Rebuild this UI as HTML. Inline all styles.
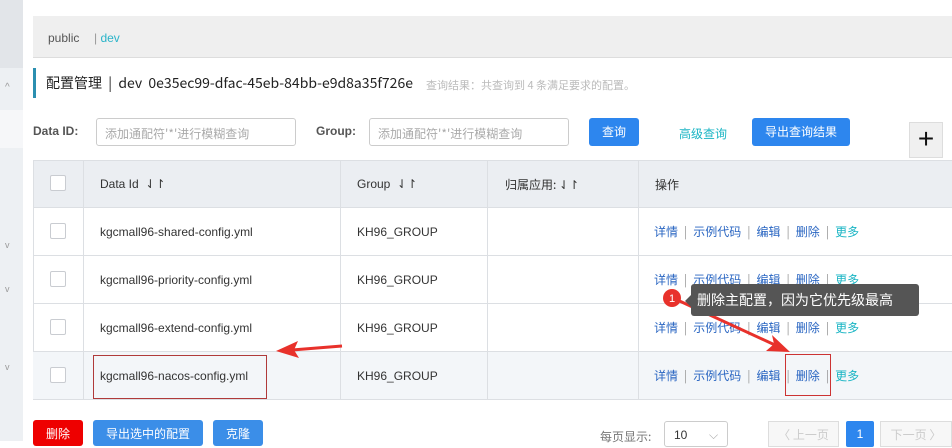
<!DOCTYPE html>
<html><head><meta charset="utf-8"><style>
*{box-sizing:border-box;margin:0;padding:0}
body{width:952px;height:441px;overflow:hidden;background:#fff;font-family:"Liberation Sans","Noto Sans CJK SC",sans-serif;font-size:12px;color:#333;position:relative}
.a{position:absolute}
.cn{font-family:"Noto Sans CJK SC","Liberation Sans",sans-serif}
.btn{position:absolute;background:#2d86ee;color:#fff;border-radius:3px;text-align:center;font-size:12px}
.cb{position:absolute;left:50px;width:16px;height:16px;border:1px solid #c9ccd1;background:#fff;border-radius:2px}
.row{position:absolute;left:33px;width:919px;height:48px;border-bottom:1px solid #dcdfe3}
.cell{position:absolute;top:0;height:100%;line-height:48px;font-size:12px;color:#333}
.ops{position:absolute;left:654px;font-size:12px;color:#2a66c2;line-height:48px}
.ops i{font-style:normal;color:#999;margin:0 6px}
.ops b{font-weight:normal;color:#1bb5c4}
.vl{position:absolute;top:160px;height:240px;width:1px;background:#dcdfe3}
</style></head><body>
<div class="a" style="left:0;top:0;width:23px;height:441px;background:#edf0f3"></div>
<div class="a" style="left:0;top:0;width:23px;height:68px;background:#e2e5e9"></div>
<div class="a" style="left:0;top:110px;width:23px;height:38px;background:#f6f7f9"></div>
<div class="a" style="left:5px;top:82px;color:#999;font-size:10px">^</div>
<div class="a" style="left:5px;top:240px;color:#999;font-size:9px">v</div>
<div class="a" style="left:5px;top:284px;color:#999;font-size:9px">v</div>
<div class="a" style="left:5px;top:362px;color:#999;font-size:9px">v</div>

<div class="a" style="left:33px;top:16px;width:919px;height:42px;background:#efefef;border-bottom:1px solid #ddd"></div>
<div class="a" style="left:48px;top:31px;font-size:12px;color:#555">public</div>
<div class="a" style="left:94px;top:31px;font-size:12px;color:#2bb4c9"><span style="color:#999">|</span> dev</div>

<div class="a" style="left:33px;top:68px;width:3px;height:30px;background:#2b8fb0"></div>
<div class="a cn" style="left:46px;top:73px;font-size:14px;color:#222">配置管理 &nbsp;| &nbsp;dev &nbsp;0e35ec99-dfac-45eb-84bb-e9d8a35f726e</div>
<div class="a cn" style="left:426px;top:77px;font-size:11px;color:#bbb">查询结果：共查询到 4 条满足要求的配置。</div>

<div class="a" style="left:33px;top:124px;font-weight:bold;color:#555;font-size:12px">Data ID:</div>
<div class="a cn" style="left:96px;top:118px;width:200px;height:28px;border:1px solid #ccc;border-radius:3px;padding:6px 8px;font-size:12px;color:#aaa">添加通配符'*'进行模糊查询</div>
<div class="a" style="left:316px;top:124px;font-weight:bold;color:#555;font-size:12px">Group:</div>
<div class="a cn" style="left:369px;top:118px;width:200px;height:28px;border:1px solid #ccc;border-radius:3px;padding:6px 8px;font-size:12px;color:#aaa">添加通配符'*'进行模糊查询</div>
<div class="btn cn" style="left:589px;top:118px;width:50px;height:28px;line-height:28px">查询</div>
<div class="a cn" style="left:679px;top:125px;color:#1bb5c4;font-size:12px">高级查询</div>
<div class="btn cn" style="left:752px;top:118px;width:98px;height:28px;line-height:28px">导出查询结果</div>
<div class="a" style="left:909px;top:122px;width:34px;height:36px;background:#f0f0f0;border:1px solid #ddd;text-align:center;line-height:32px;font-size:28px;color:#111">+</div>

<div class="a" style="left:33px;top:160px;width:919px;height:48px;background:#ebeef2;border-top:1px solid #dcdfe3;border-bottom:1px solid #dcdfe3"></div>
<div class="a" style="left:33px;top:160px;width:1px;height:240px;background:#dcdfe3"></div>
<div class="cb" style="top:175px"></div>
<div class="a" style="left:100px;top:177px;color:#333">Data Id &nbsp;⇃↾</div>
<div class="a" style="left:357px;top:177px;color:#333">Group &nbsp;⇃↾</div>
<div class="a cn" style="left:505px;top:176px;color:#333">归属应用: ⇃↾</div>
<div class="a cn" style="left:655px;top:176px;color:#333">操作</div>

<div class="row" style="top:208px"><div class="cb" style="left:17px;top:15px"></div><div class="cell" style="left:67px">kgcmall96-shared-config.yml</div><div class="cell" style="left:324px">KH96_GROUP</div><div class="ops cn" style="left:621px">详情<i>|</i>示例代码<i>|</i>编辑<i>|</i>删除<i>|</i><b>更多</b></div></div>
<div class="row" style="top:256px"><div class="cb" style="left:17px;top:15px"></div><div class="cell" style="left:67px">kgcmall96-priority-config.yml</div><div class="cell" style="left:324px">KH96_GROUP</div><div class="ops cn" style="left:621px">详情<i>|</i>示例代码<i>|</i>编辑<i>|</i>删除<i>|</i><b>更多</b></div></div>
<div class="row" style="top:304px"><div class="cb" style="left:17px;top:15px"></div><div class="cell" style="left:67px">kgcmall96-extend-config.yml</div><div class="cell" style="left:324px">KH96_GROUP</div><div class="ops cn" style="left:621px">详情<i>|</i>示例代码<i>|</i>编辑<i>|</i>删除<i>|</i><b>更多</b></div></div>
<div class="row" style="top:352px;background:#f3f6f9"><div class="cb" style="left:17px;top:15px"></div><div class="cell" style="left:67px">kgcmall96-nacos-config.yml</div><div class="cell" style="left:324px">KH96_GROUP</div><div class="ops cn" style="left:621px">详情<i>|</i>示例代码<i>|</i>编辑<i>|</i>删除<i>|</i><b>更多</b></div></div>
<div class="vl" style="left:83px"></div><div class="vl" style="left:340px"></div><div class="vl" style="left:487px"></div><div class="vl" style="left:638px"></div>

<div class="a" style="left:93px;top:355px;width:174px;height:44px;border:1px solid #b03a3a"></div>
<div class="a" style="left:785px;top:354px;width:46px;height:42px;border:1px solid #c33"></div>

<svg class="a" style="left:0;top:0" width="952" height="441">
<path d="M342,346 L292,350" stroke="#e8312b" stroke-width="3"/>
<path d="M276,351 L298,341 L294,350 L299,358 Z" fill="#e8312b"/>
<path d="M673,298 L775,345" stroke="#e8312b" stroke-width="3"/>
<path d="M790,352 L766,351 L774,344 L772,335 Z" fill="#e8312b"/>
<circle cx="672" cy="298" r="9" fill="#e8312b"/>
<text x="672" y="302" fill="#fff" font-size="11" text-anchor="middle" font-family="Liberation Sans">1</text>
</svg>
<div class="a" style="left:691px;top:284px;width:228px;height:32px;background:#555;border-radius:3px"></div>
<div class="a" style="left:685px;top:295px;width:0;height:0;border-top:6px solid transparent;border-bottom:6px solid transparent;border-right:6px solid #555"></div>
<div class="a cn" style="left:697px;top:290px;color:#fff;font-size:14px">删除主配置，因为它优先级最高</div>

<div class="btn cn" style="left:33px;top:420px;width:50px;height:26px;line-height:28px;background:#e00;">删除</div>
<div class="btn cn" style="left:93px;top:420px;width:110px;height:26px;line-height:28px;background:#3b8ee8">导出选中的配置</div>
<div class="btn cn" style="left:213px;top:420px;width:50px;height:26px;line-height:28px;background:#3b8ee8">克隆</div>
<div class="a cn" style="left:600px;top:428px;color:#777;font-size:12px">每页显示:</div>
<div class="a" style="left:664px;top:421px;width:64px;height:26px;border:1px solid #ccc;border-radius:3px;padding:6px 9px;font-size:12px">10 <span style="position:absolute;left:44px;color:#aaa">⌵</span></div>
<div class="a cn" style="left:768px;top:421px;width:71px;height:26px;border:1px solid #ddd;color:#ccc;text-align:center;line-height:26px;background:#f7f7f7">〈 上一页</div>
<div class="a" style="left:846px;top:421px;width:28px;height:26px;background:#2d86ee;color:#fff;text-align:center;line-height:26px;border-radius:2px">1</div>
<div class="a cn" style="left:880px;top:421px;width:72px;height:26px;border:1px solid #ddd;color:#ccc;text-align:center;line-height:26px;background:#f7f7f7">下一页 〉</div>
</body></html>
